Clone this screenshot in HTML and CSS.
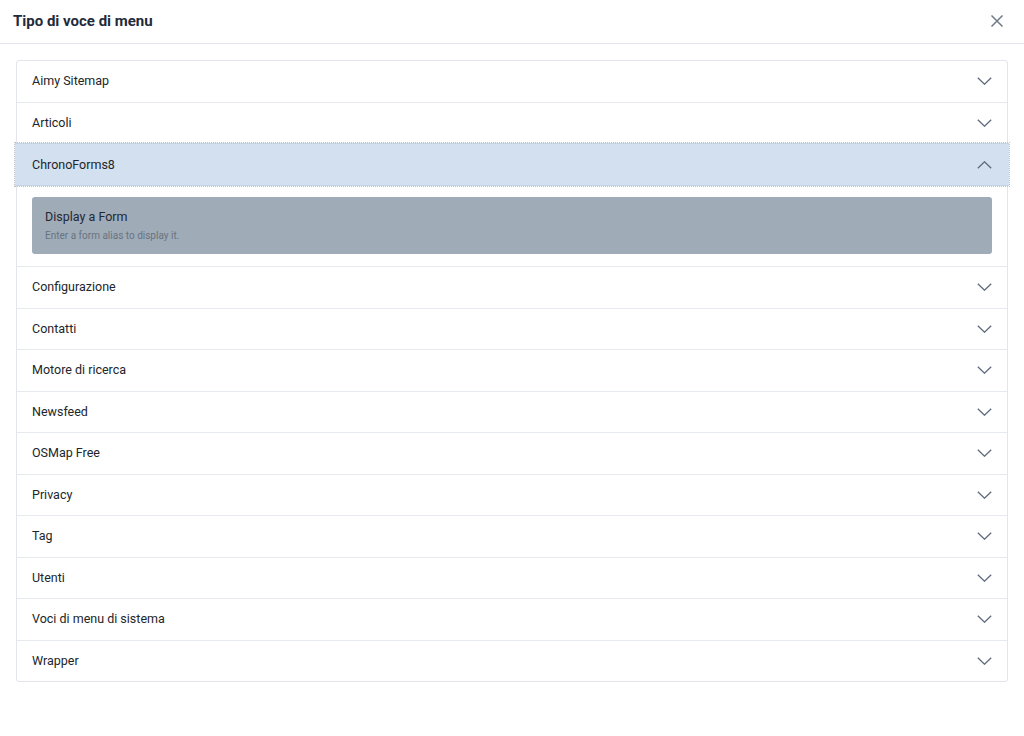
FILE: index.html
```html
<!DOCTYPE html>
<html lang="it">
<head>
  <meta charset="UTF-8" />
  <meta name="viewport" content="width=device-width, initial-scale=1.0"/>
  <title>Tipo di voce di menu</title>
  <link rel="stylesheet" href="styles.css">
</head>
<body>
  <div class="modal_header">
    <h3 class="modal_title">Tipo di voce di menu</h3>
    <button class="close_btn" aria-label="Chiudi">
      <svg width="14" height="14" viewBox="0 0 14 14"><path d="M1.5 1.5 L12.5 12.5 M12.5 1.5 L1.5 12.5" stroke="#6d7a88" stroke-width="1.5" fill="none"/></svg>
    </button>
  </div>

  <div class="modal_body">
    <div class="accordion">
      <div class="acc_item"><div class="acc_head"><span>Aimy Sitemap</span><svg class="chev" width="15" height="8" viewBox="0 0 15 8"><path d="M0.8 0.8 L7.5 7.2 L14.2 0.8" /></svg></div></div>
      <div class="acc_item"><div class="acc_head"><span>Articoli</span><svg class="chev" width="15" height="8" viewBox="0 0 15 8"><path d="M0.8 0.8 L7.5 7.2 L14.2 0.8" /></svg></div></div>
      <div class="acc_item open">
        <div class="acc_head active"><span>ChronoForms8</span><svg class="chev" width="15" height="8" viewBox="0 0 15 8"><path d="M0.8 7.2 L7.5 0.8 L14.2 7.2" /></svg></div>
        <div class="acc_body">
          <a class="option_card" href="#">
            <span class="option_title">Display a Form</span>
            <span class="option_desc">Enter a form alias to display it.</span>
          </a>
        </div>
      </div>
      <div class="acc_item"><div class="acc_head"><span>Configurazione</span><svg class="chev" width="15" height="8" viewBox="0 0 15 8"><path d="M0.8 0.8 L7.5 7.2 L14.2 0.8" /></svg></div></div>
      <div class="acc_item"><div class="acc_head"><span>Contatti</span><svg class="chev" width="15" height="8" viewBox="0 0 15 8"><path d="M0.8 0.8 L7.5 7.2 L14.2 0.8" /></svg></div></div>
      <div class="acc_item"><div class="acc_head"><span>Motore di ricerca</span><svg class="chev" width="15" height="8" viewBox="0 0 15 8"><path d="M0.8 0.8 L7.5 7.2 L14.2 0.8" /></svg></div></div>
      <div class="acc_item"><div class="acc_head"><span>Newsfeed</span><svg class="chev" width="15" height="8" viewBox="0 0 15 8"><path d="M0.8 0.8 L7.5 7.2 L14.2 0.8" /></svg></div></div>
      <div class="acc_item"><div class="acc_head"><span>OSMap Free</span><svg class="chev" width="15" height="8" viewBox="0 0 15 8"><path d="M0.8 0.8 L7.5 7.2 L14.2 0.8" /></svg></div></div>
      <div class="acc_item"><div class="acc_head"><span>Privacy</span><svg class="chev" width="15" height="8" viewBox="0 0 15 8"><path d="M0.8 0.8 L7.5 7.2 L14.2 0.8" /></svg></div></div>
      <div class="acc_item"><div class="acc_head"><span>Tag</span><svg class="chev" width="15" height="8" viewBox="0 0 15 8"><path d="M0.8 0.8 L7.5 7.2 L14.2 0.8" /></svg></div></div>
      <div class="acc_item"><div class="acc_head"><span>Utenti</span><svg class="chev" width="15" height="8" viewBox="0 0 15 8"><path d="M0.8 0.8 L7.5 7.2 L14.2 0.8" /></svg></div></div>
      <div class="acc_item"><div class="acc_head"><span>Voci di menu di sistema</span><svg class="chev" width="15" height="8" viewBox="0 0 15 8"><path d="M0.8 0.8 L7.5 7.2 L14.2 0.8" /></svg></div></div>
      <div class="acc_item"><div class="acc_head"><span>Wrapper</span><svg class="chev" width="15" height="8" viewBox="0 0 15 8"><path d="M0.8 0.8 L7.5 7.2 L14.2 0.8" /></svg></div></div>
    </div>
  </div>
</body>
</html>
```

FILE: styles.css
```css
body {
  margin: 0;
  font-family: Roboto, "Noto Sans", Arial, sans-serif;
  background-color: #fff;
  color: #22262a;
}

.modal_header {
  display: flex;
  align-items: center;
  justify-content: space-between;
  height: 43px;
  padding: 0 20px 0 13px;
  border-bottom: 1px solid #e3e6ea;
}

.modal_title {
  margin: 0;
  margin-top: -2px;
  font-size: 15px;
  font-weight: 700;
  color: #1f2b3b;
}

.close_btn {
  background: none;
  border: none;
  padding: 0;
  margin-top: -2px;
  cursor: pointer;
  display: flex;
}

.modal_body {
  padding: 16px 16px;
}

.accordion {
  border: 1px solid #e2e5e9;
  border-radius: 3px;
}

.acc_item {
  border-top: 1px solid #e6e9ed;
}

.acc_item:first-child {
  border-top: none;
}

.acc_head {
  display: flex;
  align-items: center;
  justify-content: space-between;
  height: 40.5px;
  padding: 0 15px 0 15px;
  font-size: 12.5px;
  cursor: pointer;
}

.acc_head span {
  margin-top: -1px;
}

.acc_head.active {
  background-color: #d3e0ef;
  height: 41px;
  margin: -1px -2px 0 -2px;
  padding: 0 17px;
  border-top: 1px solid #c3d3e6;
  border-bottom: 1px solid #c3d3e6;
  outline: 1px dotted #b9c2cc;
}

.chev {
  fill: none;
  stroke: #5d6b7c;
  stroke-width: 1.3;
}

.acc_body {
  padding: 11px 15px 12px 15px;
}

.option_card {
  display: flex;
  flex-direction: column;
  background-color: #a0abb8;
  border-radius: 3px;
  padding: 12px 13px 12px 13px;
  text-decoration: none;
}

.option_title {
  font-size: 12.5px;
  color: #1f2833;
  line-height: 15px;
}

.option_desc {
  font-size: 10px;
  color: #67737f;
  margin-top: 5px;
  line-height: 13px;
}
```
